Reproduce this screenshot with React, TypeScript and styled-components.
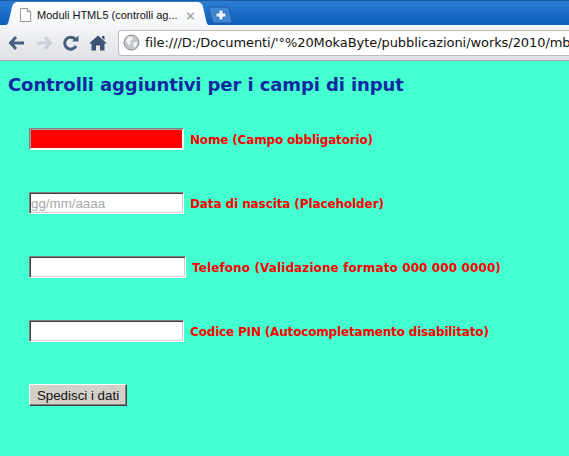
import React from "react";
import styled, { createGlobalStyle } from "styled-components";

const GlobalStyle = createGlobalStyle`
  html, body {
    margin: 0;
    padding: 0;
    background: #44ffcf;
    overflow: hidden;
  }
  svg {
    flex-shrink: 0;
  }
`;

const App = () => {
  return (
    <Window>
      <GlobalStyle />
      <TabStrip>
        <Tab>
          <svg width="13" height="16" viewBox="0 0 14 16">
            <path d="M1.5 1 H9 L12.500 4.500 V15 H1.500 Z" fill="#fff" stroke="#8a8f96" />
            <path d="M9 1 V4.500 H12.500" fill="#e4e6e9" stroke="#8a8f96" />
          </svg>
          <TabTitle>Moduli HTML5 (controlli ag...</TabTitle>
          <TabClose>×</TabClose>
        </Tab>
        <NewTab>
          <svg width="25" height="18" viewBox="0 0 25 18">
            <path d="M1 1 H18 Q20 1 21 3 L24 15 Q24.500 17 22 17 H7 Q5 17 4.500 15 L1 3 Q0.500 1 1 1 Z" fill="#3f86d4" stroke="#1d5ea6" />
            <path d="M11 4 H15 V7 H18 V11 H15 V14 H11 V11 H8 V7 H11 Z" fill="#eaf2fb" stroke="#2a6cb5" strokeWidth="0.8" />
          </svg>
        </NewTab>
      </TabStrip>
      <Toolbar>
        <NavIcon>
          <svg width="18" height="16" viewBox="0 0 18 16">
            <path d="M8 2 L2.500 8 L8 14 M3 8 H16" fill="none" stroke="#4a5f7d" strokeWidth="3" />
          </svg>
        </NavIcon>
        <NavIcon>
          <svg width="18" height="16" viewBox="0 0 18 16">
            <path d="M10 2 L15.500 8 L10 14 M15 8 H2" fill="none" stroke="#c9d0da" strokeWidth="3" />
          </svg>
        </NavIcon>
        <NavIcon>
          <svg width="18" height="16" viewBox="0 0 18 16">
            <path d="M14 11 A6 6 0 1 1 13.500 4.500" fill="none" stroke="#4a5f7d" strokeWidth="3" />
            <path d="M10 6.500 H16.500 V0.500 Z" fill="#4a5f7d" />
          </svg>
        </NavIcon>
        <NavIcon>
          <svg width="18" height="16" viewBox="0 0 18 16">
            <path d="M9 0.500 L18 8.500 H15.500 V15.500 H11 V10.500 H7 V15.500 H2.500 V8.500 H0 Z" fill="#3f5474" />
            <path d="M13 1 H15.500 V5 L13 3 Z" fill="#3f5474" />
          </svg>
        </NavIcon>
        <AddressBar>
          <svg width="17" height="17" viewBox="0 0 17 17">
            <circle cx="8.500" cy="8.500" r="7.500" fill="#c4c7cb" stroke="#85898e" />
            <path d="M5 3 L9 2.500 L10 5 L7 7 L8 10 L5.500 11 L3 7 Z M11 8 L14.500 8.500 L12 13.500 L10 12 Z" fill="#f2f3f4" />
          </svg>
          <AddressText>file:///D:/Documenti/'°%20MokaByte/pubblicazioni/works/2010/mb</AddressText>
        </AddressBar>
      </Toolbar>
      <Page>
        <Heading>Controlli aggiuntivi per i campi di input</Heading>
        <Form>
          <Row>
            <Field $required />
            <Label>Nome (Campo obbligatorio)</Label>
          </Row>
          <Row>
            <Field placeholder="gg/mm/aaaa" />
            <Label $spacing={-0.1}>Data di nascita (Placeholder)</Label>
          </Row>
          <Row>
            <Field $wide />
            <Label $spacing={0.11}>Telefono (Validazione formato 000 000 0000)</Label>
          </Row>
          <Row>
            <Field />
            <Label>Codice PIN (Autocompletamento disabilitato)</Label>
          </Row>
          <Row>
            <Submit type="button">Spedisci i dati</Submit>
          </Row>
        </Form>
      </Page>
    </Window>
  );
};

export default App;

const Window = styled.div`
  width: 569px;
  height: 456px;
  display: flex;
  flex-direction: column;
  overflow: hidden;
  background: #44ffcf;
`;
const TabStrip = styled.div`
  height: 25px;
  padding: 1px 0 0 3px;
  box-sizing: border-box;
  display: flex;
  background: linear-gradient(#2d7dd6, #0b5fb8);
  border-top: 1px solid #1c5d9f;
`;
const Tab = styled.div`
  width: 208px;
  height: 24px;
  box-sizing: border-box;
  padding: 2px 0 0 16px;
  display: flex;
  align-items: center;
  background: linear-gradient(#ffffff, #f5f6f8);
  clip-path: path("M0 24 Q5 24 6 18 L9 5 Q10 0 15 0 H194 Q199 0 200 5 L203 18 Q204 24 208 24 Z");
`;
const TabTitle = styled.span`
  margin-left: 5px;
  width: 146px;
  font: 11px "Liberation Sans", Arial, sans-serif;
  color: #111;
  white-space: nowrap;
`;
const TabClose = styled.span`
  margin-left: 3px;
  font: bold 15px "Liberation Sans", Arial, sans-serif;
  color: #a9adb3;
`;
const NewTab = styled.div`
  margin: 4px 0 0 -3px;
  height: 18px;
`;
const Toolbar = styled.div`
  height: 36px;
  box-sizing: border-box;
  padding: 5px 0 5px 8px;
  display: flex;
  align-items: center;
  background: linear-gradient(#f5f6f8, #dfe1e5);
  border-bottom: 1px solid #a8a8a8;
`;
const NavIcon = styled.div`
  width: 18px;
  height: 16px;
  margin-right: 9px;
  display: flex;
`;
const AddressBar = styled.div`
  flex: 1;
  min-width: 0;
  height: 26px;
  margin-left: 2px;
  box-sizing: border-box;
  padding-left: 4px;
  display: flex;
  align-items: center;
  overflow: hidden;
  background: #fff;
  border: 1px solid #bcbcbc;
  border-right: none;
  border-radius: 4px 0 0 4px;
`;
const AddressText = styled.span`
  margin-left: 5px;
  font: 13px "DejaVu Sans", Verdana, sans-serif;
  letter-spacing: -0.07px;
  color: #111;
  white-space: nowrap;
`;
const Page = styled.div`
  flex: 1;
  padding: 13px 8px 0;
  background: #44ffcf;
`;
const Heading = styled.h1`
  margin: 0;
  font: bold 18px/22px "DejaVu Sans", Verdana, sans-serif;
  letter-spacing: -0.1px;
  color: #0f2aa0;
  white-space: nowrap;
`;
const Form = styled.div`
  margin-top: 32px;
  padding-left: 21px;
  display: flex;
  flex-direction: column;
  gap: 42px;
`;
const Row = styled.div`
  height: 22px;
  display: flex;
  align-items: center;
  gap: 6px;
`;
const Field = styled.input<{ $required?: boolean; $wide?: boolean }>`
  width: ${(p) => (p.$wide ? "157px" : "155px")};
  height: 22px;
  box-sizing: border-box;
  padding: 0 1px;
  border: 1px solid;
  border-color: #808080 #fff #fff #808080;
  box-shadow: inset 1px 1px 0 ${(p) => (p.$required ? "#a0a0a0" : "#404040")},
    inset -1px -1px 0 ${(p) => (p.$required ? "#fff" : "#d4d0c8")};
  outline: none;
  background: ${(p) => (p.$required ? "#ff0000" : "#fff")};
  font: 13.33px "Liberation Sans", Arial, sans-serif;
  &::placeholder {
    color: #a9a9a9;
    opacity: 1;
  }
`;
const Label = styled.label<{ $spacing?: number }>`
  margin-top: 2px;
  font: bold 12px "DejaVu Sans", Verdana, sans-serif;
  letter-spacing: ${(p) => p.$spacing ?? -0.17}px;
  color: #ff0000;
  white-space: nowrap;
`;
const Submit = styled.button`
  width: 98px;
  height: 22px;
  box-sizing: border-box;
  padding: 0;
  background: #d4d0c8;
  border: 1px solid;
  border-color: #fff #404040 #404040 #fff;
  box-shadow: inset -1px -1px 0 #808080;
  border-radius: 0;
  font: 13.33px "Liberation Sans", Arial, sans-serif;
  color: #111;
`;
